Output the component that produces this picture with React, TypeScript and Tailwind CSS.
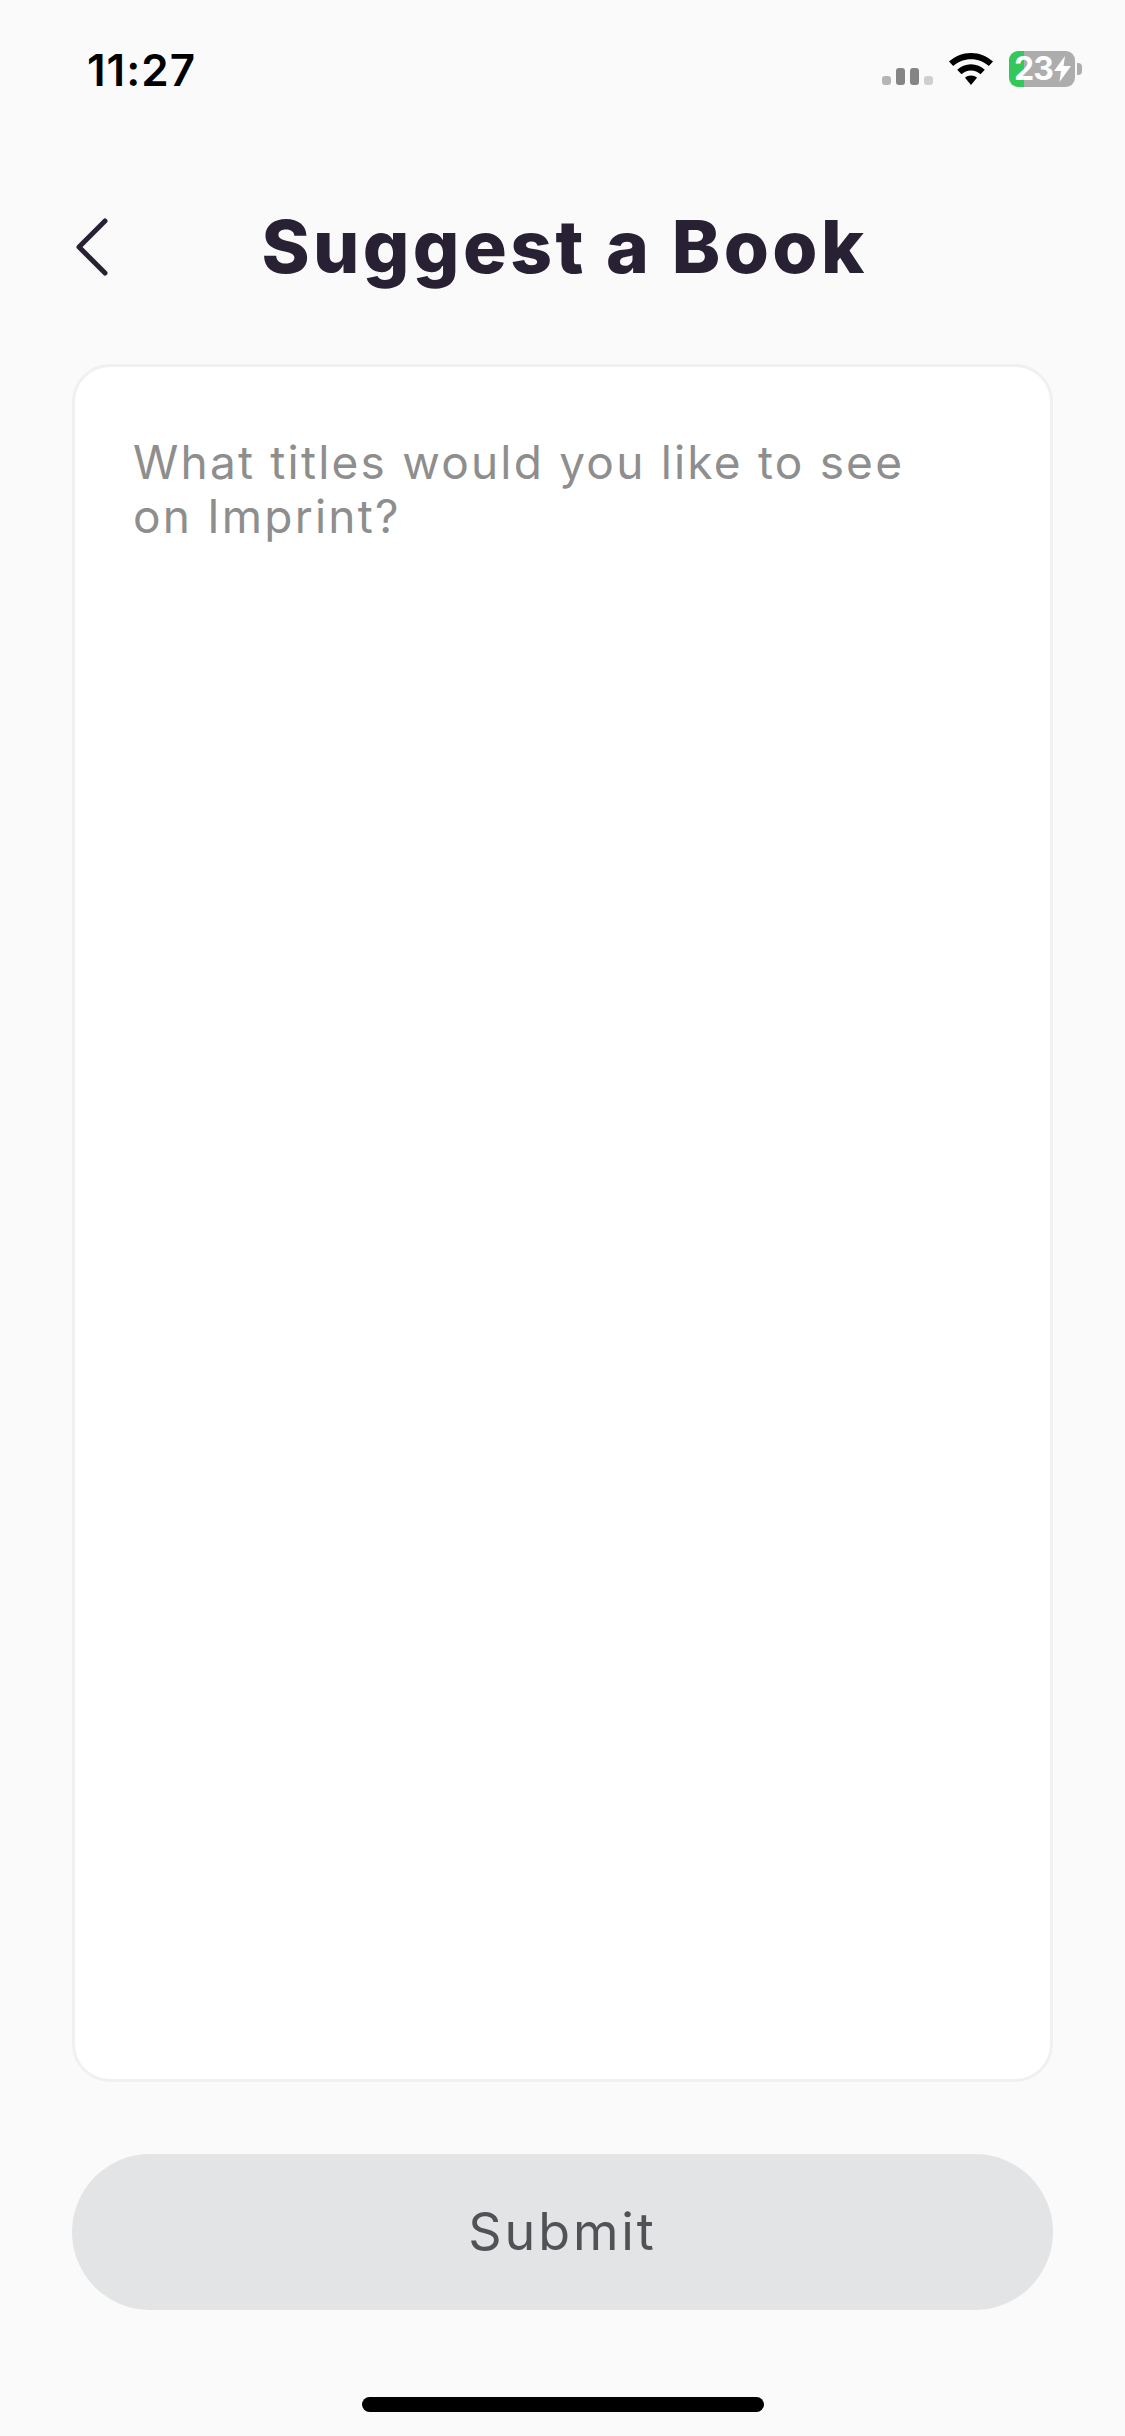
import React from 'react';

const StatusBar = () => (
  <div className="h-[138px] pl-[87px] pr-[43px] flex justify-between items-start">
    <span className="mt-[43px] text-[44px] leading-[54px] font-semibold text-black tracking-[1px]">11:27</span>
    <div className="flex items-end pt-[51px]">
      {/* signal dots */}
      <div className="flex items-end gap-[5px] mb-[2px]">
        <div className="w-[9px] h-[9px] rounded-[3px] bg-[#b5b5b5]" />
        <div className="w-[9px] h-[17px] rounded-[3px] bg-[#858585]" />
        <div className="w-[9px] h-[17px] rounded-[3px] bg-[#858585]" />
        <div className="w-[9px] h-[9px] rounded-[3px] bg-[#cfcfcf]" />
      </div>
      <svg width="46" height="34" viewBox="0 0 46 34" className="ml-[15px] mb-[1px]">
        <path d="M23 1C14.5 1 7 4.3 1 9.6L5.2 14C10 9.8 16.2 7.2 23 7.2S36 9.8 40.8 14L45 9.6C39 4.3 31.5 1 23 1Z" fill="#000" />
        <path d="M23 12.3C17.6 12.3 12.8 14.4 9.2 17.7L13.5 22.2C16 19.9 19.3 18.5 23 18.5S30 19.9 32.5 22.2L36.8 17.7C33.2 14.4 28.4 12.3 23 12.3Z" fill="#000" />
        <path d="M23 23.5C20.6 23.5 18.6 24.4 17 25.8L23 33L29 25.8C27.4 24.4 25.4 23.5 23 23.5Z" fill="#000" />
      </svg>
      <div className="ml-[15px] flex items-center">
        <div className="w-[66px] h-[36px] rounded-[9px] bg-[linear-gradient(to_right,#34c759_15px,#adadad_15px)] flex items-center pl-[5px] gap-[1px]">
          <span className="text-[32px] leading-[36px] font-bold text-white tracking-[-1px]">23</span>
          <svg width="17" height="26" viewBox="0 0 17 26" className="shrink-0">
            <path d="M11 0L0 15H7L5.5 26L17 10H9.5L11 0Z" fill="#fff" />
          </svg>
        </div>
        <div className="w-[5px] h-[12px] ml-[2px] rounded-r-[4px] bg-[#adadad]" />
      </div>
    </div>
  </div>
);

const App = () => {
  return (
    <div className="w-[1125px] h-[2436px] bg-[#fafafa] flex flex-col font-['Inter',sans-serif]">
      <StatusBar />
      <div className="mt-[65px] h-[88px] px-[72px] grid grid-cols-[1fr_auto_1fr] items-center">
        <svg width="40" height="60" viewBox="0 0 40 60">
          <path d="M33 4L7 30L33 56" fill="none" stroke="#272133" strokeWidth="5" strokeLinecap="round" strokeLinejoin="round" />
        </svg>
        <h1 className="ml-[4px] text-[73px] leading-[88px] font-extrabold text-[#272133] tracking-[3.4px]">Suggest a Book</h1>
        <div />
      </div>
      <div className="mx-[72px] mt-[73px] h-[1718px] bg-white border-[3px] border-[#f0f0f0] rounded-[38px] px-[58px] pt-[68px]">
        <p className="text-[46px] leading-[54px] text-[#8e8e8e] tracking-[2.2px] max-w-[790px]">What titles would you like to see on Imprint?</p>
      </div>
      <button className="mx-[72px] mt-[72px] h-[156px] bg-[#e3e4e6] rounded-[78px] flex items-center justify-center text-[52px] tracking-[2.9px] text-[#525156]">Submit</button>
      <div className="mt-[87px] mx-auto w-[402px] h-[15px] rounded-full bg-black" />
    </div>
  );
};

export default App;
